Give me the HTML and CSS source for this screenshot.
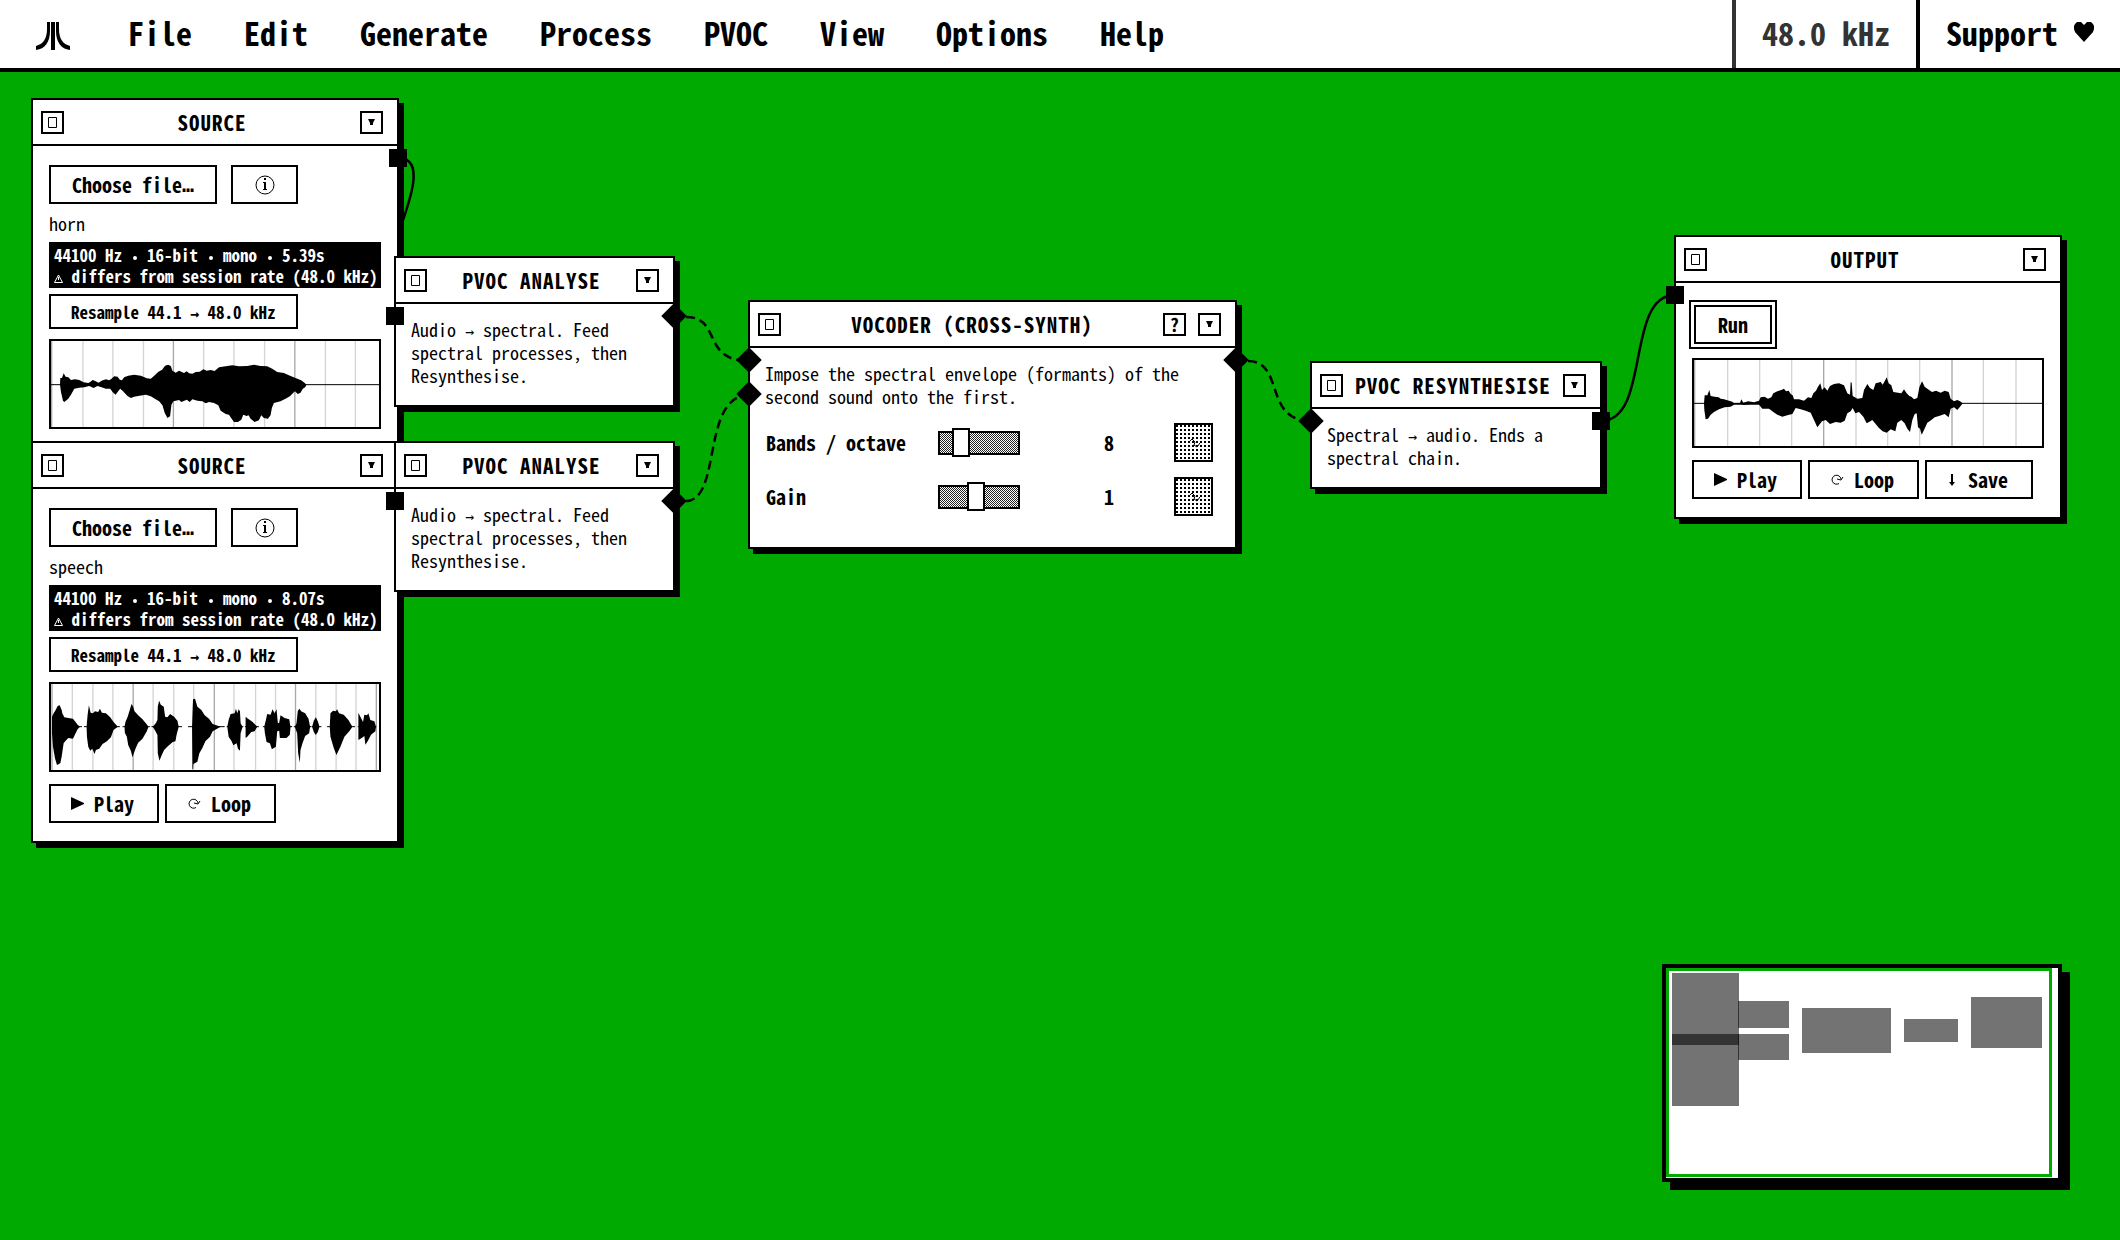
FILE: index.html
```html
<!DOCTYPE html>
<html lang="en">
<head>
    <meta charset="UTF-8">
    <meta name="viewport" content="width=device-width, initial-scale=1.0">
    <title>PVOC Patch</title>
    <link rel="stylesheet" href="styles.css">
</head>
<body>

    <!-- Menu bar -->
    <header class="menubar">
        <button class="logo" aria-label="Desk">
            <svg width="34" height="28" viewBox="0 0 34 28">
                <path d="M15 0h4v28h-4z"/>
                <path d="M11 0h3v9c0 11-5 18-14 19v-4c7-2 11-7 11-17z"/>
                <path d="M23 0h-3v9c0 11 5 18 14 19v-4c-7-2-11-7-11-17z"/>
            </svg>
        </button>
        <nav class="menus">
            <button>File</button>
            <button>Edit</button>
            <button>Generate</button>
            <button>Process</button>
            <button>PVOC</button>
            <button>View</button>
            <button>Options</button>
            <button>Help</button>
        </nav>
        <button class="rate">48.0 kHz</button>
        <a class="support" href="#support">Support
            <svg width="20" height="20" viewBox="0 0 20 20"><path d="M10 20L1 10 0 7V4l1-2 2-2h4l3 3 3-3h4l2 2 1 2v3l-1 3z"/></svg>
        </a>
    </header>

    <!-- Patch canvas -->
    <main class="canvas">
        <svg class="wires">
            <path d="M398 86C453 86 341 245 396 245"/>
            <path class="spectral" d="M686 245C722 245 701 289 749 289"/>
            <path class="spectral" d="M686 429C722 429 701 323 749 323"/>
            <path class="spectral" d="M1248 289C1285 289 1263 349 1311 349"/>
            <path d="M1601 349C1651 349 1625 223 1675 223"/>
        </svg>

        <section class="node source" style="left: 31px; top: 26px">
            <div class="titlebar">
                <button class="gadget" aria-label="Close"><svg width="9" height="11" viewBox="0 0 9 11"><path class="line" d="M.5.5h8v10h-8z"/></svg></button>
                <h2>SOURCE</h2>
                <button class="gadget" aria-label="Collapse"><svg width="7" height="7" viewBox="0 0 7 7"><path d="M0 0h7L5 4v2H2V4z"/></svg></button>
            </div>
            <div class="body">
                <div class="row file-row">
                    <button class="btn">Choose file<span class="sym">…</span></button>
                    <button class="btn info" aria-label="Info"><svg width="20" height="20" viewBox="0 0 20 20"><circle class="line" cx="10" cy="10" r="9"/><path d="M9 3h2v2H9zM8 7h3v7h1v1H8v-1h1V8H8z"/></svg></button>
                </div>
                <p class="file-name">horn</p>
                <div class="format">
                    <p>44100 Hz <i></i> 16-bit <i></i> mono <i></i> 5.39s</p>
                    <p><svg width="9" height="9" viewBox="0 0 9 9"><path class="line" d="M4.500 1L8.500 8.500H.5zM4.500 3v3"/></svg> differs from session rate (48.0 kHz)</p>
                </div>
                <button class="btn small">Resample 44.1 <span class="sym">→</span> 48.0 kHz</button>
                <svg class="wave" viewBox="0 -131 986 258" preserveAspectRatio="none">
                    <path class="tick" d="M96-131v258M186-131v258M278-131v258M459-131v258M550-131v258M642-131v258M825-131v258M915-131v258"/>
                    <path class="tick major" d="M2-131v258M368-131v258M733-131v258"/>
                    <path class="zero" d="M0 0h986"/>
                    <path d="M27 0L28-20 33-20 38-34 44-24 52-22 60-14 72-16 85-14 98-7 112-5 118-8 125-14 133-11 143-6 152-12 165-16 175-13 182-18 190-25 200-24 207-15 213-13 220-22 232-27 250-30 270-27 288-19 300-18 312-28 322-38 334-45 343-57 352-60 360-56 365-42 375-36 385-42 393-38 400-35 408-40 415-34 425-33 435-38 447-39 458-46 468-42 480-44 492-41 505-52 525-55 545-58 565-55 590-56 610-60 630-56 650-55 665-48 680-38 700-35 715-28 735-20 752-13 762-6 768 0 764 8 757 12 750 24 742 28 733 20 718 35 705 42 690 50 670 55 664 70 660 92 652 102 640 100 632 92 625 107 612 112 600 102 594 92 588 94 578 90 572 105 562 112 550 112 540 98 535 90 525 88 510 78 503 62 490 55 475 52 465 56 455 50 440 48 425 44 417 52 408 45 392 52 385 46 368 50 362 60 358 95 350 100 342 85 335 62 325 50 312 42 300 35 285 30 262 34 250 36 240 40 230 34 215 18 208 12 202 20 194 30 185 22 178 12 165 12 152 8 140 4 128 10 115 4 100 8 85 9 70 12 60 30 52 42 40 52 36 48 30 22z"/>
                </svg>
            </div>
            <span class="port out"></span>
        </section>

        <section class="node source" style="left: 31px; top: 369px">
            <div class="titlebar">
                <button class="gadget" aria-label="Close"><svg width="9" height="11" viewBox="0 0 9 11"><path class="line" d="M.5.5h8v10h-8z"/></svg></button>
                <h2>SOURCE</h2>
                <button class="gadget" aria-label="Collapse"><svg width="7" height="7" viewBox="0 0 7 7"><path d="M0 0h7L5 4v2H2V4z"/></svg></button>
            </div>
            <div class="body">
                <div class="row file-row">
                    <button class="btn">Choose file<span class="sym">…</span></button>
                    <button class="btn info" aria-label="Info"><svg width="20" height="20" viewBox="0 0 20 20"><circle class="line" cx="10" cy="10" r="9"/><path d="M9 3h2v2H9zM8 7h3v7h1v1H8v-1h1V8H8z"/></svg></button>
                </div>
                <p class="file-name">speech</p>
                <div class="format">
                    <p>44100 Hz <i></i> 16-bit <i></i> mono <i></i> 8.07s</p>
                    <p><svg width="9" height="9" viewBox="0 0 9 9"><path class="line" d="M4.500 1L8.500 8.500H.5zM4.500 3v3"/></svg> differs from session rate (48.0 kHz)</p>
                </div>
                <button class="btn small">Resample 44.1 <span class="sym">→</span> 48.0 kHz</button>
                <svg class="wave" viewBox="0 -128 986 258" preserveAspectRatio="none">
                    <path class="tick" d="M64-128v258M126-128v258M186-128v258M307-128v258M369-128v258M429-128v258M550-128v258M615-128v258M675-128v258M796-128v258M857-128v258M917-128v258"/>
                    <path class="tick major" d="M3-128v258M247-128v258M491-128v258M735-128v258M978-128v258"/>
                    <path class="zero" d="M3 0h90M99 0h108M215 0h82M302 0h92M412 0h110M528 0h50M583 0h42M637 0h88M730 0h52M783 0h30M830 0h84M922 0h56"/>
                    <path d="M3 0L3-30 8-40 14-50 20-62 26-64 32-50 34-40 40-28 52-26 66-24 72-16 80-6 87 0 80 8 74 20 66 36 52 34 44 42 38 50 32 90 28 110 18 115 12 95 6 60 3 20z"/>
                    <path d="M107 0L110-35 114-64 119-42 126-40 132-46 142-44 147-54 153-42 165-40 178-28 188-14 201 0 188 10 180 32 168 44 155 52 145 66 135 70 131 82 124 66 118 72 112 60 108 30z"/>
                    <path d="M221 0L224-15 230-28 236-48 242-68 247-60 251-46 262-34 275-22 287-8 293 0 288 14 275 36 262 48 254 66 245 92 240 72 232 55 228 30 222 18z"/>
                    <path d="M306 0L315-10 320-20 321-60 325-78 330-66 339-60 343-30 350-28 358-38 370-30 380-18 384 0 378 22 374 44 366 46 352 58 340 70 333 85 326 102 321 80 320 25 312 10z"/>
                    <path d="M424 0L426-60 427-82 433-84 440-60 452-50 462-34 475-24 486-8 510 0 486 14 478 30 464 44 455 64 446 80 440 105 428 112 427 128 425 128z"/>
                    <path d="M530 0L534-20 540-38 552-40 556-54 560-40 564-52 568-46 570-10 576 0 570 20 568 72 562 66 558 50 548 56 543 44 534 30z"/>
                    <path d="M585 0L585-30 592-24 598-20 606-14 612-8 620 0 612 14 602 16 590 30 585 34z"/>
                    <path d="M641 0L646-20 650-38 660-36 666-52 672-40 678-52 682-10 686-12 690-34 702-26 716-22 720 0 718 24 708 34 688 34 686 12 680 14 676 60 664 68 658 50 648 46 643 20z"/>
                    <path d="M733 0L738-10 742-48 747-54 752-46 764-40 774-24 779 0 776 20 764 28 756 50 750 70 748 108 743 80 740 20z"/>
                    <path d="M785 0L790-18 796-28 802-16 807 0 802 16 796 25 790 16z"/>
                    <path d="M838 0L840-40 848-48 856-46 860-52 866-40 880-36 894-20 906 0 898 12 882 30 870 60 858 85 850 64 840 30z"/>
                    <path d="M924 0L924-42 930-30 938-14 942-36 950-34 954-40 960-20 972-16 977 0 975 14 962 24 952 44 945 54 942 28 934 34 924 40z"/>
                </svg>
                <div class="row transport">
                    <button class="btn"><svg width="13" height="13" viewBox="0 0 13 13"><path d="M0 0l13 6v1L0 13z"/></svg> Play</button>
                    <button class="btn"><svg width="14" height="12" viewBox="0 0 14 12"><path class="line" d="M11 5A4.500 4.500 0 1 0 9 9.500M7 5l4 1 2-3"/></svg> Loop</button>
                </div>
            </div>
            <span class="port out"></span>
        </section>

        <section class="node analyse" style="left: 394px; top: 184px">
            <div class="titlebar">
                <button class="gadget" aria-label="Close"><svg width="9" height="11" viewBox="0 0 9 11"><path class="line" d="M.5.5h8v10h-8z"/></svg></button>
                <h2>PVOC ANALYSE</h2>
                <button class="gadget" aria-label="Collapse"><svg width="7" height="7" viewBox="0 0 7 7"><path d="M0 0h7L5 4v2H2V4z"/></svg></button>
            </div>
            <div class="body">
                <p class="about">Audio <span class="sym">→</span> spectral. Feed spectral processes, then Resynthesise.</p>
            </div>
            <span class="port in"></span>
            <span class="port out diamond"></span>
        </section>

        <section class="node analyse" style="left: 394px; top: 369px">
            <div class="titlebar">
                <button class="gadget" aria-label="Close"><svg width="9" height="11" viewBox="0 0 9 11"><path class="line" d="M.5.5h8v10h-8z"/></svg></button>
                <h2>PVOC ANALYSE</h2>
                <button class="gadget" aria-label="Collapse"><svg width="7" height="7" viewBox="0 0 7 7"><path d="M0 0h7L5 4v2H2V4z"/></svg></button>
            </div>
            <div class="body">
                <p class="about">Audio <span class="sym">→</span> spectral. Feed spectral processes, then Resynthesise.</p>
            </div>
            <span class="port in"></span>
            <span class="port out diamond"></span>
        </section>

        <section class="node vocoder" style="left: 748px; top: 228px">
            <div class="titlebar">
                <button class="gadget" aria-label="Close"><svg width="9" height="11" viewBox="0 0 9 11"><path class="line" d="M.5.5h8v10h-8z"/></svg></button>
                <h2>VOCODER (CROSS-SYNTH)</h2>
                <button class="gadget">?</button>
                <button class="gadget" aria-label="Collapse"><svg width="7" height="7" viewBox="0 0 7 7"><path d="M0 0h7L5 4v2H2V4z"/></svg></button>
            </div>
            <div class="body">
                <p class="about">Impose the spectral envelope (formants) of the second sound onto the first.</p>
                <div class="param">
                    <label for="bands">Bands / octave</label>
                    <input type="range" id="bands" min="1" max="36" value="8">
                    <output for="bands">8</output>
                    <button class="mod" aria-label="Modulate bands"><svg width="12" height="10" viewBox="0 0 12 10"><path class="line" d="M1 4l3-3 3 3-1 3 3 2 3-4"/></svg></button>
                </div>
                <div class="param">
                    <label for="gain">Gain</label>
                    <input type="range" id="gain" min="0" max="2.2" step="0.1" value="1">
                    <output for="gain">1</output>
                    <button class="mod" aria-label="Modulate gain"><svg width="12" height="10" viewBox="0 0 12 10"><path class="line" d="M1 4l3-3 3 3-1 3 3 2 3-4"/></svg></button>
                </div>
            </div>
            <span class="port in diamond"></span>
            <span class="port in diamond second"></span>
            <span class="port out diamond"></span>
        </section>

        <section class="node resynth" style="left: 1310px; top: 289px">
            <div class="titlebar">
                <button class="gadget" aria-label="Close"><svg width="9" height="11" viewBox="0 0 9 11"><path class="line" d="M.5.5h8v10h-8z"/></svg></button>
                <h2>PVOC RESYNTHESISE</h2>
                <button class="gadget" aria-label="Collapse"><svg width="7" height="7" viewBox="0 0 7 7"><path d="M0 0h7L5 4v2H2V4z"/></svg></button>
            </div>
            <div class="body">
                <p class="about">Spectral <span class="sym">→</span> audio. Ends a spectral chain.</p>
            </div>
            <span class="port in diamond"></span>
            <span class="port out"></span>
        </section>

        <section class="node output" style="left: 1674px; top: 163px">
            <div class="titlebar">
                <button class="gadget" aria-label="Close"><svg width="9" height="11" viewBox="0 0 9 11"><path class="line" d="M.5.5h8v10h-8z"/></svg></button>
                <h2>OUTPUT</h2>
                <button class="gadget" aria-label="Collapse"><svg width="7" height="7" viewBox="0 0 7 7"><path d="M0 0h7L5 4v2H2V4z"/></svg></button>
            </div>
            <div class="body">
                <button class="btn run">Run</button>
                <svg class="wave" viewBox="0 -130 1044 258" preserveAspectRatio="none">
                    <path class="tick" d="M101-130v258M197-130v258M293-130v258M486-130v258M581-130v258M677-130v258M868-130v258M966-130v258"/>
                    <path class="tick major" d="M2-130v258M389-130v258M774-130v258"/>
                    <path class="zero" d="M0 0h1044"/>
                    <path d="M30 0L32-24 40-24 46-40 50-22 62-20 74-18 80-14 90-12 105-8 115-5 120 0 138-1 142-12 148-2 162-6 180-3 195-8 200-18 212-20 222-14 232-18 238-30 250-36 262-40 270-44 276-36 284-38 290-28 296-24 300-12 315-12 330-8 342-18 352-16 358-30 366-38 372-50 379-60 384-40 392-48 400-38 408-52 420-58 435-60 450-54 460-30 468-26 470-64 473-62 476-22 490-14 505-16 510-40 520-58 528-46 538-40 545-60 560-64 566-56 574-70 578-78 584-60 592-54 598-34 612-32 622-30 630-42 638-30 646-22 652-20 660-12 670-16 676-48 684-66 692-50 702-42 714-34 726-38 740-32 752-38 764-34 770-14 780-6 790-10 798-6 806 0 800 8 790 20 780 12 770 16 764 42 752 32 735 38 722 42 712 50 700 58 690 80 683 94 678 76 672 72 668 30 662 32 655 50 648 86 640 76 632 60 622 50 610 58 604 84 590 78 578 88 566 84 555 74 545 62 535 50 525 56 518 60 508 40 495 26 484 30 476 14 470 24 460 30 452 52 440 58 425 56 408 62 395 50 384 54 370 72 360 50 350 28 335 22 320 18 305 14 295 32 280 36 265 40 250 34 238 26 225 16 205 16 195 4 170 4 150 5 140 4 120 4 110 10 92 12 75 18 60 26 50 34 42 46 35 48 31 20z"/>
                </svg>
                <div class="row transport">
                    <button class="btn"><svg width="13" height="13" viewBox="0 0 13 13"><path d="M0 0l13 6v1L0 13z"/></svg> Play</button>
                    <button class="btn"><svg width="14" height="12" viewBox="0 0 14 12"><path class="line" d="M11 5A4.500 4.500 0 1 0 9 9.500M7 5l4 1 2-3"/></svg> Loop</button>
                    <button class="btn"><svg width="11" height="12" viewBox="0 0 11 12"><path d="M4 0h2v8h2l-3 4-3-4h2z"/></svg> Save</button>
                </div>
            </div>
            <span class="port in"></span>
        </section>

        <!-- Overview map -->
        <svg class="minimap" width="392" height="210" viewBox="0 0 392 210">
            <rect x="6" y="5" width="67" height="72"/>
            <rect x="6" y="66" width="67" height="72"/>
            <rect x="72" y="33" width="51" height="27"/>
            <rect x="72" y="66" width="51" height="26"/>
            <rect x="136" y="40" width="89" height="45"/>
            <rect x="238" y="51" width="54" height="23"/>
            <rect x="305" y="29" width="71" height="51"/>
            <path class="viewport" d="M1.500 1.500h383v206h-383z"/>
        </svg>
    </main>

</body>
</html>
```
FILE: styles.css
```css
/* General */
* {
    box-sizing: border-box;
}

body {
    display: flex;
    flex-direction: column;
    min-height: 100vh;
    margin: 0;
    background: #00aa00;
    color: #000;
    font-family: "Noto Sans Mono CJK JP", "DejaVu Sans Mono", monospace;
}

h2,
p {
    margin: 0;
}

button {
    margin: 0;
    border: 0;
    padding: 0;
    background: #fff;
    color: #000;
    font: inherit;
    white-space: nowrap;
}

.line {
    fill: none;
    stroke: currentColor;
    stroke-width: 1;
}

/* Menu bar */
.menubar {
    display: flex;
    height: 72px;
    border-bottom: 4px solid #000;
    background: #fff;
    font-size: 32px;
    font-weight: bold;
    line-height: 64px;
}

.logo {
    display: flex;
    align-items: center;
    padding: 4px 32px 0 36px;
}

.menus {
    display: flex;
    flex: 1;
}

.menus button,
.rate,
.support {
    padding: 0 26px 4px;
}

.rate {
    border-left: 4px solid #333;
    color: #333;
}

.support {
    display: flex;
    align-items: center;
    gap: 16px;
    border-left: 4px solid #000;
    color: #000;
    text-decoration: none;
}

/* Canvas */
.canvas {
    position: relative;
    flex: 1;
    overflow: hidden;
}

.wires {
    position: absolute;
    width: 100%;
    height: 100%;
    fill: none;
    stroke: #000;
    stroke-width: 2.5;
}

.spectral {
    stroke-dasharray: 9 5;
}

/* Nodes */
.node {
    position: absolute;
    border: 2px solid #000;
    background: #fff;
    box-shadow: 5px 5px 0 #000;
    font-size: 18px;
    line-height: 23px;
}

.source { width: 368px; }
.analyse { width: 281px; }
.vocoder { width: 489px; }
.resynth { width: 292px; }
.output { width: 388px; }

.titlebar {
    display: flex;
    align-items: center;
    gap: 12px;
    height: 46px;
    padding: 0 14px 0 8px;
    border-bottom: 2px solid #000;
}

.titlebar h2 {
    flex: 1;
    font-size: 21px;
    font-weight: bold;
    letter-spacing: 1px;
    text-align: center;
    white-space: nowrap;
}

.gadget {
    display: flex;
    flex: none;
    align-items: center;
    justify-content: center;
    width: 23px;
    height: 23px;
    border: 2px solid #000;
    font-weight: bold;
}

.body {
    padding: 14px 16px 18px;
}

.vocoder .body {
    padding: 14px 16px 31px;
}

.about {
    margin-left: -1px;
}

.sym {
    font-family: "DejaVu Sans Mono", monospace;
    font-size: 15px;
    line-height: 1;
}

.row {
    display: flex;
    gap: 6px;
}

.btn {
    display: flex;
    align-items: center;
    gap: 10px;
    height: 39px;
    padding: 0 20px;
    border: 2px solid #000;
    font-size: 20px;
    font-weight: bold;
}

.btn.small {
    display: block;
    height: 35px;
    font-size: 17px;
}

/* Source and output contents */
.file-row {
    gap: 14px;
    margin-top: 5px;
}

.file-row .btn {
    gap: 0;
    padding: 0 21px;
}

.file-row .sym {
    font-size: 20px;
}

.info {
    justify-content: center;
    width: 67px;
}

.file-name {
    margin: 8px 0 7px;
}

.format {
    margin-bottom: 6px;
    padding: 2px 5px;
    background: #000;
    color: #fff;
    font-size: 17px;
    font-weight: bold;
    line-height: 21px;
    white-space: nowrap;
}

.format i {
    display: inline-block;
    width: 4px;
    height: 4px;
    margin: 0 2px 2px;
    border-radius: 2px;
    background: #fff;
}

.wave {
    display: block;
    width: 100%;
    height: 90px;
    margin: 10px 0 12px;
    border: 2px solid #000;
}

.zero {
    stroke: #000;
    stroke-width: 3;
}

.tick {
    stroke: #d4d4d4;
    stroke-width: 4;
}

.major {
    stroke: #a8a8a8;
}

.run {
    margin: 8px 0 14px 2px;
    padding: 0 22px;
    outline: 2px solid #000;
    outline-offset: 3px;
}

.transport .btn {
    padding: 0 23px 0 20px;
}

/* Parameters */
.param {
    display: flex;
    align-items: center;
    height: 39px;
    margin-top: 15px;
    padding-right: 6px;
    font-size: 20px;
    font-weight: bold;
}

.param label {
    width: 172px;
}

.param output {
    width: 94px;
    text-align: right;
}

.param input {
    appearance: none;
    width: 82px;
    height: 24px;
    margin: 0;
    border: 2px solid #000;
    background: #fff repeating-conic-gradient(#222 0 25%, #fff 0 50%) 0 0 / 2px 2px;
}

.param input::-webkit-slider-thumb {
    appearance: none;
    width: 18px;
    height: 29px;
    border: 2px solid #000;
    background: #fff;
}

.mod {
    display: flex;
    align-items: center;
    justify-content: center;
    width: 39px;
    height: 39px;
    margin-left: auto;
    border: 2px solid #000;
    background: #fff conic-gradient(from 270deg at 2px 2px, #000 25%, #fff 0) 0 0 / 4px 4px;
}

/* Ports */
.port {
    position: absolute;
    top: 49px;
    width: 18px;
    height: 18px;
    background: #000;
}

.port.in { left: -10px; }
.port.out { right: -10px; }
.port.second { top: 83px; }

.diamond {
    transform: rotate(45deg);
}

/* Overview map */
.minimap {
    position: absolute;
    right: 58px;
    bottom: 58px;
    box-sizing: content-box;
    border: 4px solid #000;
    background: #fff;
    box-shadow: 8px 8px 0 #000;
    fill: rgba(0, 0, 0, 0.55);
}

.viewport {
    fill: none;
    stroke: #00aa00;
    stroke-width: 3;
}
```
